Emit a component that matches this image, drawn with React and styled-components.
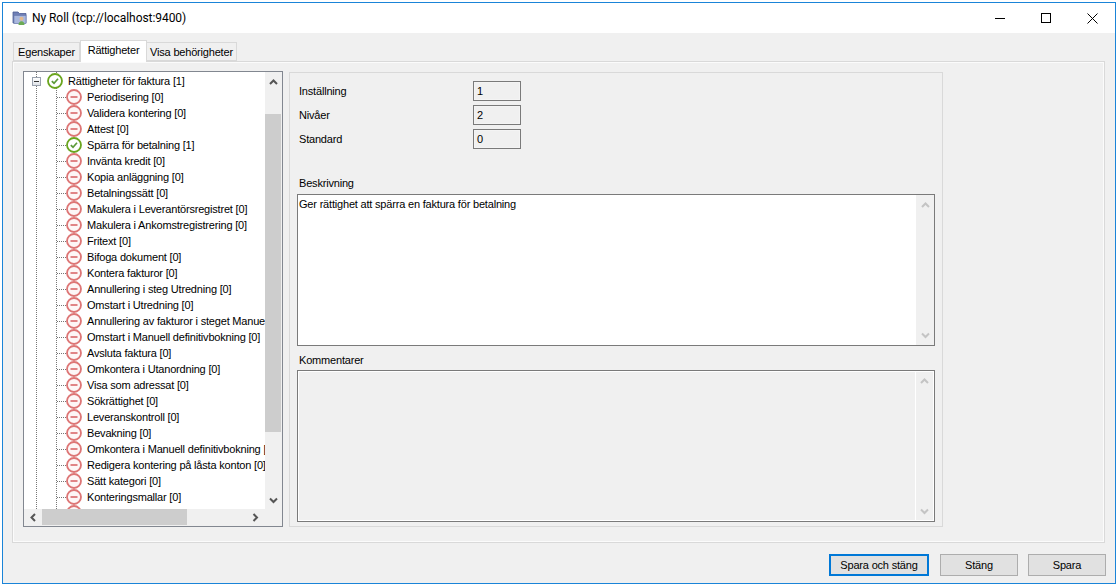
import React from "react";
import styled, { createGlobalStyle } from "styled-components";

const Global = createGlobalStyle`
  html, body {
    margin: 0;
    padding: 0;
    background: #fff;
  }
  body {
    font-family: "Liberation Sans", Arial, sans-serif;
    font-size: 11px;
    letter-spacing: -0.19px;
    color: #000;
    overflow: hidden;
  }
  * {
    box-sizing: border-box;
  }
`;

const Window = styled.div`
  margin: 2px 2px 0 2px;
  width: 1114px;
  height: 582px;
  border: 1px solid #1a84d8;
  background: #f0f0f0;
  display: flex;
  flex-direction: column;
`;

const TitleBar = styled.div`
  height: 30px;
  flex: none;
  background: #fff;
  display: flex;
  align-items: center;
  padding-left: 9px;
`;

const TitleText = styled.span`
  font-family: "Roboto", sans-serif;
  font-size: 12px;
  letter-spacing: -0.06px;
  margin-left: 4px;
  flex: 1;
`;

const WinButton = styled.div`
  width: 46px;
  height: 30px;
  display: flex;
  align-items: center;
  justify-content: center;
`;

const Content = styled.div`
  flex: 1;
  display: flex;
  flex-direction: column;
  padding: 8px 10px 0 9px;
`;

const TabStrip = styled.div`
  height: 20px;
  display: flex;
  align-items: flex-end;
  padding-left: 1px;
  position: relative;
  z-index: 1;
`;

const Tab = styled.div`
  height: ${(p) => (p.$active ? "22px" : "19px")};
  margin-bottom: ${(p) => (p.$active ? "-1px" : "0")};
  width: ${(p) => p.$w}px;
  background: ${(p) => (p.$active ? "#fff" : "#f0f0f0")};
  border: 1px solid #d9d9d9;
  border-bottom: ${(p) => (p.$active ? "none" : "1px solid #d9d9d9")};
  border-left: ${(p) => (p.$first || p.$active ? "1px solid #d9d9d9" : "none")};
  display: flex;
  align-items: center;
  justify-content: center;
  white-space: nowrap;
  padding: ${(p) => (p.$active ? "0 0 3px" : "1px 0 0")};
`;

const Panel = styled.div`
  width: 1093px;
  height: 482px;
  border: 1px solid #d9d9d9;
  box-shadow: inset 0 0 0 1px #fbfbfb;
  padding: 9px 10px;
  display: flex;
  gap: 6px;
  align-items: flex-start;
`;

const Tree = styled.div`
  width: 260px;
  height: 456px;
  border: 1px solid #828790;
  display: grid;
  grid-template-columns: 241px 16px;
  grid-template-rows: 437px 16px;
  background: #f0f0f0;
`;

const TreeBody = styled.div`
  overflow: hidden;
  background-color: #fff;
  background-image:
    linear-gradient(#777 50%, transparent 50%),
    linear-gradient(#777 50%, transparent 50%);
  background-size: 1px 2px, 1px 2px;
  background-position: 12px 16px, 32px 24px;
  background-repeat: repeat-y;
  padding-top: 1px;
`;

const Row = styled.div`
  height: 16px;
  display: flex;
  align-items: center;
  white-space: nowrap;
  padding-left: ${(p) => (p.$root ? 8 : 33)}px;
`;

const Connector = styled.span`
  width: 9px;
  height: 1px;
  flex: none;
  background-image: linear-gradient(90deg, #777 50%, transparent 50%);
  background-size: 2px 1px;
`;

const Label = styled.span`
  margin-left: 5px;
`;

const ExpandBox = styled.span`
  width: 9px;
  height: 9px;
  flex: none;
  border: 1px solid #9aa2ae;
  background: linear-gradient(#fff, #dfe3e8);
  display: flex;
  align-items: center;
  justify-content: center;
  margin-right: 6px;
  &::before {
    content: "";
    width: 5px;
    height: 1px;
    background: #333;
  }
`;

const VBar = styled.div`
  display: flex;
  flex-direction: column;
  align-items: center;
  background: #f0f0f0;
`;

const VThumb = styled.div`
  width: 100%;
  height: 318px;
  margin: 25px 0 auto;
  background: #cdcdcd;
`;

const ArrowCell = styled.div`
  width: 16px;
  height: 17px;
  flex: none;
  display: flex;
  align-items: center;
  justify-content: center;
  padding: ${(p) => p.$pad || 0};
`;

const HBar = styled.div`
  display: flex;
  align-items: center;
  background: #f0f0f0;
`;

const HThumb = styled.div`
  width: 145px;
  height: 16px;
  margin-left: 2px;
  background: #cdcdcd;
`;

const HSpacer = styled.div`
  flex: 1;
`;

const Group = styled.div`
  margin-top: 1px;
  width: 654px;
  height: 455px;
  border: 1px solid #d9d9d9;
  padding: 8px 7px 0 7px;
  display: flex;
  flex-direction: column;
`;

const FieldGrid = styled.div`
  display: grid;
  grid-template-columns: 176px 48px;
  row-gap: 4px;
  align-items: center;
`;

const FieldLabel = styled.label`
  padding-left: 2px;
`;

const ValueBox = styled.div`
  height: 20px;
  border: 1px solid #7a7a7a;
  box-shadow: inset 0 0 0 1px #f4f4f4;
  background: #f0f0f0;
  padding-left: 3px;
  display: flex;
  align-items: center;
`;

const SectionLabel = styled.div`
  height: 14px;
  line-height: 14px;
  padding-left: 2px;
  margin-top: ${(p) => p.$top}px;
  margin-bottom: ${(p) => p.$bottom}px;
`;

const TextBox = styled.div`
  width: 638px;
  height: 152px;
  flex: none;
  border: 1px solid #7a7a7a;
  background: ${(p) => (p.$disabled ? "#f0f0f0" : "#fff")};
  box-shadow: ${(p) => (p.$disabled ? "inset 0 0 0 1px #fff" : "none")};
  display: flex;
`;

const TextValue = styled.div`
  flex: 1;
  padding: 2px 1px;
  line-height: 14px;
`;

const TextScroll = styled.div`
  width: 18px;
  flex: none;
  margin: ${(p) => (p.$disabled ? "1px 1px 1px 0" : "0")};
  background: #f0f0f0;
  border-left: ${(p) => (p.$disabled ? "1px solid #fff" : "none")};
  display: flex;
  flex-direction: column;
  justify-content: space-between;
  align-items: center;
  padding: ${(p) => (p.$disabled ? "4px 0 3px" : "5px 0 4px")};
`;

const Footer = styled.div`
  display: flex;
  justify-content: flex-end;
  padding-top: 11px;
  width: 1094px;
  gap: 10px;
`;

const Button = styled.button`
  width: ${(p) => p.$w}px;
  height: 22px;
  font: inherit;
  letter-spacing: inherit;
  color: #000;
  padding: 0;
  background: #e1e1e1;
  border: ${(p) => (p.$primary ? "2px solid #0078d7" : "1px solid #adadad")};
  margin-right: ${(p) => p.$mr || 0}px;
`;

const Chevron = ({ dir = "up", color = "#555" }) => {
  const pts = {
    up: "2,7 5.5,3.5 9,7",
    down: "2,3.5 5.5,7 9,3.5",
    left: "7,2 3.5,5.5 7,9",
    right: "3.5,2 7,5.5 3.5,9",
  };
  return (
    <svg width="11" height="11" viewBox="0 0 11 11">
      <polyline points={pts[dir]} fill="none" stroke={color} strokeWidth="2" />
    </svg>
  );
};

const DeniedIcon = () => (
  <svg width="16" height="16" viewBox="0 0 16 16" style={{ flex: "none" }}>
    <circle cx="8" cy="8" r="7" fill="#fdf6f6" stroke="#dd7575" strokeWidth="1.8" />
    <rect x="4.5" y="7.2" width="7" height="1.6" fill="#d9686a" />
  </svg>
);

const AllowedIcon = () => (
  <svg width="16" height="16" viewBox="0 0 16 16" style={{ flex: "none" }}>
    <circle cx="8" cy="8" r="7" fill="#fff" stroke="#6aa51e" strokeWidth="1.8" />
    <polyline points="4.8,8.2 7,10.2 11,5.8" fill="none" stroke="#5c9a38" strokeWidth="1.7" />
  </svg>
);

const RoleIcon = () => (
  <svg width="16" height="16" viewBox="0 0 16 16" style={{ flex: "none" }}>
    <path d="M1 2h5l1.5 1.5H14V13H1z" fill="#6f7fb5" stroke="#4d5d96" strokeWidth="0.8" />
    <rect x="2" y="5.5" width="12" height="8" fill="#aab8dd" stroke="#6878ad" strokeWidth="0.6" />
    <circle cx="9.5" cy="8.8" r="2" fill="#e3b98e" />
    <path d="M6.5 15c0-2.6 1.3-3.8 3-3.8s3 1.2 3 3.8z" fill="#6cab55" />
  </svg>
);

const Minimize = () => (
  <svg width="10" height="10" viewBox="0 0 10 10">
    <rect x="0" y="5" width="10" height="1" fill="#000" />
  </svg>
);

const Maximize = () => (
  <svg width="10" height="10" viewBox="0 0 10 10">
    <rect x="0.5" y="0.5" width="9" height="9" fill="none" stroke="#000" />
  </svg>
);

const Close = () => (
  <svg width="11" height="11" viewBox="0 0 11 11">
    <path d="M0.5 0.5L10.5 10.5M10.5 0.5L0.5 10.5" stroke="#000" strokeWidth="1" />
  </svg>
);

const rights = [
  ["Periodisering [0]"],
  ["Validera kontering [0]"],
  ["Attest [0]"],
  ["Spärra för betalning [1]", true],
  ["Invänta kredit [0]"],
  ["Kopia anläggning [0]"],
  ["Betalningssätt [0]"],
  ["Makulera i Leverantörsregistret [0]"],
  ["Makulera i Ankomstregistrering [0]"],
  ["Fritext [0]"],
  ["Bifoga dokument [0]"],
  ["Kontera fakturor [0]"],
  ["Annullering i steg Utredning [0]"],
  ["Omstart i Utredning [0]"],
  ["Annullering av fakturor i steget Manuell definitivbokning [0]"],
  ["Omstart i Manuell definitivbokning [0]"],
  ["Avsluta faktura [0]"],
  ["Omkontera i Utanordning [0]"],
  ["Visa som adressat [0]"],
  ["Sökrättighet [0]"],
  ["Leveranskontroll [0]"],
  ["Bevakning [0]"],
  ["Omkontera i Manuell definitivbokning [0]"],
  ["Redigera kontering på låsta konton [0]"],
  ["Sätt kategori [0]"],
  ["Konteringsmallar [0]"],
  [""],
];

const fields = [
  ["Inställning", "1"],
  ["Nivåer", "2"],
  ["Standard", "0"],
];

export default function App() {
  return (
    <>
      <Global />
      <Window>
        <TitleBar>
          <RoleIcon />
          <TitleText>Ny Roll (tcp://localhost:9400)</TitleText>
          <WinButton><Minimize /></WinButton>
          <WinButton><Maximize /></WinButton>
          <WinButton><Close /></WinButton>
        </TitleBar>
        <Content>
          <TabStrip>
            <Tab $w={67} $first>Egenskaper</Tab>
            <Tab $w={67} $active>Rättigheter</Tab>
            <Tab $w={90}>Visa behörigheter</Tab>
          </TabStrip>
          <Panel>
            <Tree>
              <TreeBody>
                <Row $root>
                  <ExpandBox />
                  <AllowedIcon />
                  <Label>Rättigheter för faktura [1]</Label>
                </Row>
                {rights.map(([name, allowed], i) => (
                  <Row key={i}>
                    <Connector />
                    {allowed ? <AllowedIcon /> : <DeniedIcon />}
                    <Label>{name}</Label>
                  </Row>
                ))}
              </TreeBody>
              <VBar>
                <ArrowCell $pad="3px 0 0"><Chevron dir="up" /></ArrowCell>
                <VThumb />
                <ArrowCell><Chevron dir="down" /></ArrowCell>
              </VBar>
              <HBar>
                <ArrowCell $pad="0 0 0 3px"><Chevron dir="left" /></ArrowCell>
                <HThumb />
                <HSpacer />
                <ArrowCell $pad="0 3px 0 0"><Chevron dir="right" /></ArrowCell>
              </HBar>
            </Tree>
            <Group>
              <FieldGrid>
                {fields.map(([label, value]) => (
                  <React.Fragment key={label}>
                    <FieldLabel>{label}</FieldLabel>
                    <ValueBox>{value}</ValueBox>
                  </React.Fragment>
                ))}
              </FieldGrid>
              <SectionLabel $top={27} $bottom={4}>Beskrivning</SectionLabel>
              <TextBox>
                <TextValue>Ger rättighet att spärra en faktura för betalning</TextValue>
                <TextScroll>
                  <Chevron dir="up" color="#c4c4c4" />
                  <Chevron dir="down" color="#c4c4c4" />
                </TextScroll>
              </TextBox>
              <SectionLabel $top={7} $bottom={3}>Kommentarer</SectionLabel>
              <TextBox $disabled>
                <TextValue />
                <TextScroll $disabled>
                  <Chevron dir="up" color="#c4c4c4" />
                  <Chevron dir="down" color="#c4c4c4" />
                </TextScroll>
              </TextBox>
            </Group>
          </Panel>
          <Footer>
            <Button $w={100} $primary $mr={1}>Spara och stäng</Button>
            <Button $w={78}>Stäng</Button>
            <Button $w={78}>Spara</Button>
          </Footer>
        </Content>
      </Window>
    </>
  );
}
